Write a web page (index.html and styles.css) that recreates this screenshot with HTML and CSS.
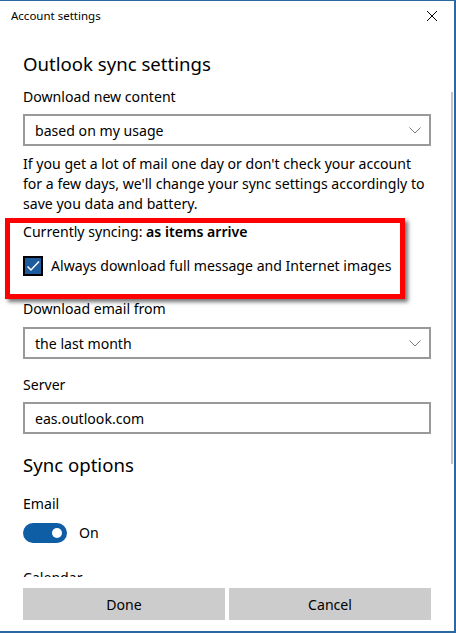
FILE: index.html
```html
<!DOCTYPE html>
<html lang="en">
<head>
    <meta charset="UTF-8">
    <meta name="viewport" content="width=device-width, initial-scale=1.0">
    <title>Account settings</title>
    <link rel="stylesheet" href="styles.css">
</head>
<body>
    <div class="window">
        <div class="titlebar">
            <span class="title">Account settings</span>
            <svg class="close" width="10" height="10" viewBox="0 0 10 10">
                <path d="M0 0 L10 10 M10 0 L0 10" stroke="#000" stroke-width="1" fill="none"/>
            </svg>
        </div>

        <div class="pane">
            <div class="pane-content">
                <h1>Outlook sync settings</h1>

                <div class="label label-first">Download new content</div>
                <div class="select">
                    <span>based on my usage</span>
                    <svg width="12" height="7" viewBox="0 0 12 7">
                        <polyline points="0.5,0.5 6,6 11.5,0.5" stroke="#7a7a7a" stroke-width="1" fill="none"/>
                    </svg>
                </div>

                <p class="hint">If you get a lot of mail one day or don't check your account for a few days, we'll change your sync settings accordingly to save you data and battery.</p>

                <p class="status">Currently syncing: <strong>as items arrive</strong></p>

                <div class="check">
                    <span class="box">
                        <svg width="16" height="16" viewBox="0 0 16 16">
                            <polyline points="2.5,8.5 6,12 14,3.5" stroke="#fff" stroke-width="1.5" fill="none"/>
                        </svg>
                    </span>
                    Always download full message and Internet images
                </div>

                <div class="label label-section">Download email from</div>
                <div class="select">
                    <span>the last month</span>
                    <svg width="12" height="7" viewBox="0 0 12 7">
                        <polyline points="0.5,0.5 6,6 11.5,0.5" stroke="#7a7a7a" stroke-width="1" fill="none"/>
                    </svg>
                </div>

                <div class="label label-next">Server</div>
                <div class="input">eas.outlook.com</div>

                <h2>Sync options</h2>

                <div class="label label-toggle">Email</div>
                <div class="toggle-row">
                    <span class="toggle"><span class="knob"></span></span>
                    On
                </div>

                <!-- next option runs under the footer -->
                <div class="label label-calendar">Calendar</div>
            </div>

            <!-- scroll thumb and the red callout sit over the content -->
            <div class="scroll-thumb"></div>
            <div class="callout"></div>
        </div>

        <div class="footer">
            <button>Done</button>
            <button>Cancel</button>
        </div>
    </div>
</body>
</html>
```

FILE: styles.css
```css
body {
    margin: 0;
    padding: 0;
    font-family: "Noto Sans", "Open Sans", sans-serif;
    color: #000;
    background: #fff;
}
.window {
    box-sizing: border-box;
    width: 456px;
    height: 633px;
    border-top: 1px solid #2b67a3;
    border-right: 2px solid #2b67a3;
    border-bottom: 2px solid #2b67a3;
    display: flex;
    flex-direction: column;
    background: #fff;
}
.titlebar {
    box-sizing: border-box;
    height: 31px;
    padding: 6px 17px 0 11px;
    display: flex;
    justify-content: space-between;
    align-items: flex-start;
    flex-shrink: 0;
}
.title {
    font-size: 11.5px;
    line-height: 17px;
}
.close {
    margin-top: 4px;
}
.pane {
    position: relative;
    flex: 1;
    overflow: hidden;
}
.pane-content {
    padding: 18px 23px 0 23px;
}
h1, h2 {
    margin: 0;
    font-size: 18.6px;
    line-height: 28px;
    font-weight: 400;
}
h2 {
    margin-top: 17px;
}
.label {
    font-size: 14.1px;
    line-height: 20px;
    margin-bottom: 7px;
}
.label-first {
    margin-top: 9px;
}
.label-section {
    margin-top: 23px;
    margin-bottom: 8px;
}
.label-next {
    margin-top: 16px;
}
.label-toggle {
    margin-top: 15px;
    margin-bottom: 9px;
}
.label-calendar {
    margin-top: 25px;
}
.select, .input {
    box-sizing: border-box;
    height: 32px;
    border: 2px solid #999;
    padding: 0 8px 0 10px;
    display: flex;
    align-items: center;
    justify-content: space-between;
    font-size: 14.1px;
}
.hint {
    margin: 8px 0 0 0;
    max-width: 405px;
    font-size: 14.1px;
    line-height: 20px;
}
.status {
    margin: 8px 0 0 0;
    font-size: 14.1px;
    line-height: 20px;
}
.status strong {
    font-weight: 600;
}
.check {
    margin-top: 14px;
    display: flex;
    align-items: center;
    gap: 8px;
    font-size: 14.1px;
    line-height: 20px;
}
.box {
    box-sizing: border-box;
    width: 20px;
    height: 20px;
    border: 2px solid #000;
    background: #1c5c9c;
    display: flex;
}
.toggle-row {
    display: flex;
    align-items: center;
    gap: 12px;
    font-size: 14.1px;
    line-height: 20px;
}
.toggle {
    width: 44px;
    height: 20px;
    border-radius: 10px;
    background: #0e5ea6;
    display: flex;
    align-items: center;
    justify-content: flex-end;
    padding-right: 5px;
    box-sizing: border-box;
}
.knob {
    width: 10px;
    height: 10px;
    border-radius: 50%;
    background: #fff;
}
.scroll-thumb {
    position: absolute;
    right: 1px;
    top: 60px;
    width: 2px;
    height: 372px;
    background: #c4c4c4;
}
.callout {
    position: absolute;
    left: 5px;
    top: 186px;
    width: 400px;
    height: 81px;
    box-sizing: border-box;
    border: 5px solid #f00;
    box-shadow: 3px 3px 4px rgba(0, 0, 0, 0.55);
    pointer-events: none;
}
.footer {
    flex-shrink: 0;
    display: flex;
    gap: 4px;
    padding: 11px 23px;
    background: #fff;
}
.footer button {
    flex: 1;
    height: 32px;
    border: none;
    background: #ccc;
    color: #000;
    font-family: inherit;
    font-size: 14.1px;
    padding: 0;
}
```
